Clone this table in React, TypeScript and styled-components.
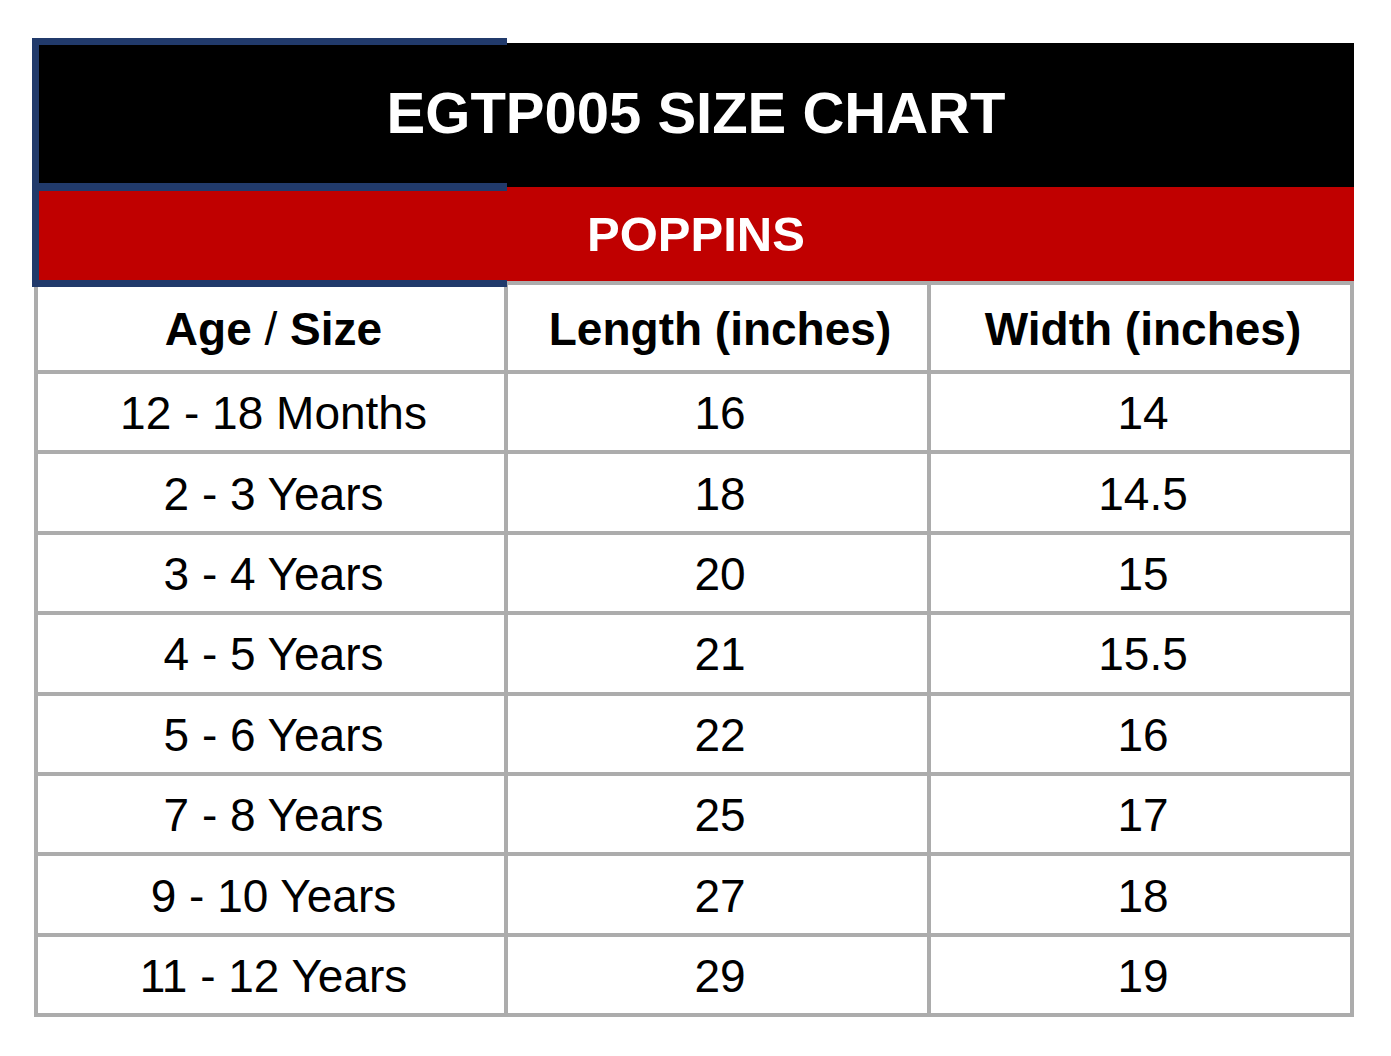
import React from 'react';
import styled, { createGlobalStyle } from 'styled-components';

const GlobalStyle = createGlobalStyle`
  html, body {
    margin: 0;
    padding: 0;
    background: #fff;
  }
  body {
    font-family: 'Liberation Sans', Arial, Helvetica, sans-serif;
  }
`;

const Page = styled.div`
  padding: 43px 0 0 34px;
`;

const Chart = styled.div`
  position: relative;
  width: 1320px;
`;

const TitleBar = styled.div`
  height: 144px;
  box-sizing: border-box;
  background: #000;
  color: #fff;
  display: flex;
  align-items: center;
  justify-content: center;
  font-size: 58px;
  font-weight: 700;
  padding: 0 0 6px 4px;
`;

const BrandBar = styled.div`
  height: 94px;
  background: #c00000;
  color: #fff;
  display: flex;
  align-items: center;
  justify-content: center;
  font-size: 49px;
  font-weight: 700;
  padding-left: 4px;
`;

// excel-style selection outline over the left part of the two header rows
const SelectionFrame = styled.div`
  position: absolute;
  left: -2px;
  top: -5px;
  width: 475px;
  height: 249px;
  box-sizing: border-box;
  border: 7px solid #213a6b;
  border-right: none;
  pointer-events: none;

  &::after {
    content: '';
    position: absolute;
    left: -7px;
    right: 0;
    top: 138px;
    height: 8px;
    background: #213a6b;
  }
`;

const Grid = styled.div`
  display: grid;
  grid-template-columns: 466px 419px 419px;
  grid-template-rows: 85px repeat(8, 76.4px);
  gap: 4px;
  padding: 4px;
  width: 1320px;
  box-sizing: border-box;
  background: #acacac;
`;

const Cell = styled.div<{ $head?: boolean }>`
  background: #fff;
  color: #000;
  display: flex;
  align-items: center;
  justify-content: center;
  font-size: 46px;
  font-weight: ${(p) => (p.$head ? 700 : 400)};
  padding: 2px 0 0 5px;
  white-space: nowrap;
`;

const Slash = styled.span`
  font-weight: 400;
`;

const rows: [string, string, string][] = [
  ['12 - 18 Months', '16', '14'],
  ['2 - 3 Years', '18', '14.5'],
  ['3 - 4 Years', '20', '15'],
  ['4 - 5 Years', '21', '15.5'],
  ['5 - 6 Years', '22', '16'],
  ['7 - 8 Years', '25', '17'],
  ['9 - 10 Years', '27', '18'],
  ['11 - 12 Years', '29', '19'],
];

export default function App() {
  return (
    <>
      <GlobalStyle />
      <Page>
        <Chart>
          <TitleBar>EGTP005 SIZE CHART</TitleBar>
          <BrandBar>POPPINS</BrandBar>
          <SelectionFrame />
          <Grid>
            <Cell $head>
              Age&nbsp;<Slash>/</Slash>&nbsp;Size
            </Cell>
            <Cell $head>Length (inches)</Cell>
            <Cell $head>Width (inches)</Cell>
            {rows.map((r) =>
              r.map((v, i) => <Cell key={r[0] + i}>{v}</Cell>)
            )}
          </Grid>
        </Chart>
      </Page>
    </>
  );
}
